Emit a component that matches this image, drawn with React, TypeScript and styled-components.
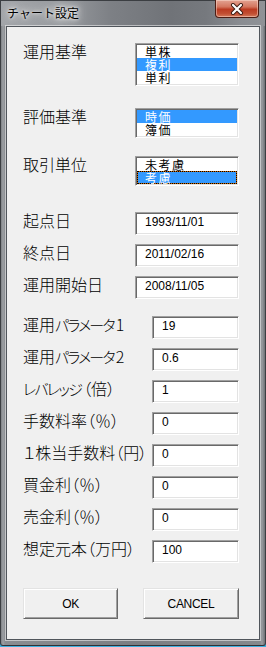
import React from 'react';
import styled, { createGlobalStyle, css } from 'styled-components';

const Global = createGlobalStyle`
  html, body { margin: 0; padding: 0; background: #3cb0e0; }
  body { width: 266px; height: 647px; overflow: hidden; }
  #root { width: 266px; height: 647px; }
`;

const Window = styled.div`
  width: 266px;
  height: 646px;
  box-sizing: border-box;
  display: flex;
  flex-direction: column;
  border: 1px solid #3b3e42;
  border-bottom-color: #2e3135;
  border-radius: 0 0 3px 3px;
  padding: 0 5px 5px 5px;
  background: linear-gradient(
    90deg,
    #7e8185 0px,
    #9da0a4 2px,
    #8a8d91 4px,
    #7b7e82 50%,
    #85888c calc(100% - 5px),
    #989b9f calc(100% - 3px),
    #6e7175 100%
  );
`;

const TitleBar = styled.div`
  flex: none;
  height: 25px;
  margin: 0 -5px;
  display: flex;
  align-items: flex-start;
  justify-content: space-between;
  background: linear-gradient(
    90deg,
    #a2a5a9 0px,
    #989b9f 60px,
    #7d8085 110px,
    #707378 170px,
    #76797e 205px,
    #8a8d92 240px,
    #8f9296 264px
  );
`;

const Title = styled.span`
  margin: 5px 0 0 6px;
  font: 12px/14px "Noto Sans CJK JP", sans-serif;
  color: #000;
  white-space: nowrap;
  text-shadow: 0 0 3px #fff, 0 0 7px rgba(255, 255, 255, 0.95), 0 0 12px rgba(255, 255, 255, 0.85);
`;

const CloseButton = styled.div`
  width: 44px;
  height: 18px;
  box-sizing: border-box;
  margin: -1px 6px 0 0;
  display: flex;
  align-items: center;
  justify-content: center;
  border: 1px solid #4c1d14;
  border-top: none;
  border-radius: 0 0 4px 4px;
  background: linear-gradient(180deg, #e3a392 0%, #d4765f 40%, #bb3b22 55%, #c24f33 80%, #d37a5c 100%);
  box-shadow: inset 0 0 0 1px rgba(255, 230, 220, 0.45);
`;

const Client = styled.div`
  flex: 1;
  box-sizing: border-box;
  background: #f0f0f0;
  border: 1px solid #50555b;
  box-shadow: 0 0 0 1px rgba(255, 255, 255, 0.5);
  padding: 16px 0 0 16px;
  display: flex;
  flex-direction: column;
`;

const Row = styled.div<{ $top: number; $label: number }>`
  display: grid;
  grid-template-columns: ${(p) => p.$label}px auto;
  align-items: start;
  margin-top: ${(p) => p.$top}px;
`;

const Label = styled.div`
  font: 300 16px/16px "Noto Sans CJK JP", sans-serif;
  font-feature-settings: "palt" 1;
  color: #000;
  white-space: nowrap;
`;

const Kana = styled.span`
  font-size: 15px;
  letter-spacing: -1.8px;
  margin-right: 2px;
`;

const sunken = css`
  border-style: solid;
  border-width: 1px;
  border-color: #a0a0a0 #ffffff #ffffff #a0a0a0;
  box-shadow: inset 1px 1px 0 #696969, inset -1px -1px 0 #e3e3e3;
`;

const ListBox = styled.div`
  ${sunken};
  width: 104px;
  box-sizing: border-box;
  padding: 1px;
  background: #fff;
  display: flex;
  flex-direction: column;
`;

const Item = styled.div<{ $sel?: boolean; $focus?: boolean }>`
  height: 13px;
  box-sizing: border-box;
  padding-left: 8px;
  font: 12px/13px "Noto Sans CJK JP", sans-serif;
  letter-spacing: 1.5px;
  white-space: nowrap;
  color: ${(p) => (p.$sel ? '#fff' : '#000')};
  background: ${(p) => (p.$sel ? '#3399ff' : 'transparent')};
  ${(p) =>
    p.$focus &&
    css`
      border: 1px dotted #000;
      padding-left: 7px;
      line-height: 11px;
      background: linear-gradient(#3399ff, #3399ff) padding-box, linear-gradient(#cc6600, #cc6600) border-box;
    `}
`;

const Field = styled.div<{ $w: number }>`
  ${sunken};
  width: ${(p) => p.$w}px;
  height: 23px;
  box-sizing: border-box;
  background: #fff;
  padding: 2px 0 0 9px;
  font: 12px/14px "Liberation Sans", Arial, sans-serif;
  color: #000;
  white-space: nowrap;
`;

const ButtonRow = styled.div`
  display: flex;
  gap: 25px;
  margin-top: 25px;
`;

const Button = styled.button<{ $w: number }>`
  width: ${(p) => p.$w}px;
  height: 31px;
  box-sizing: border-box;
  padding: 0;
  background: #f0f0f0;
  border: 1px solid;
  border-color: #e3e3e3 #696969 #696969 #e3e3e3;
  box-shadow: inset 1px 1px 0 #fff, inset -1px -1px 0 #a0a0a0;
  font: 12px/14px "Liberation Sans", Arial, sans-serif;
  letter-spacing: -0.3px;
  color: #000;
`;

const CloseIcon = () => (
  <svg width="14" height="12" viewBox="0 0 14 12">
    <path d="M3 2 L11 10 M11 2 L3 10" stroke="#3a1a12" strokeWidth="4" strokeLinecap="round" fill="none" />
    <path d="M3 2 L11 10 M11 2 L3 10" stroke="#ffffff" strokeWidth="2.2" strokeLinecap="round" fill="none" />
  </svg>
);

const dateRows = [
  { label: '起点日', value: '1993/11/01', top: 26 },
  { label: '終点日', value: '2011/02/16', top: 9 },
  { label: '運用開始日', value: '2008/11/05', top: 9 },
];

const paramRows: { label: React.ReactNode; key: string; value: string }[] = [
  { key: 'p1', label: <>運用<Kana>パラメータ</Kana>1</>, value: '19' },
  { key: 'p2', label: <>運用<Kana>パラメータ</Kana>2</>, value: '0.6' },
  { key: 'lev', label: <><Kana>レバレッジ</Kana>（倍）</>, value: '1' },
  { key: 'fee', label: '手数料率（％）', value: '0' },
  { key: 'fee1', label: '１株当手数料（円）', value: '0' },
  { key: 'buy', label: '買金利（％）', value: '0' },
  { key: 'sell', label: '売金利（％）', value: '0' },
  { key: 'cap', label: '想定元本（万円）', value: '100' },
];

export default function App() {
  return (
    <>
      <Global />
      <Window>
        <TitleBar>
          <Title>チャート設定</Title>
          <CloseButton>
            <CloseIcon />
          </CloseButton>
        </TitleBar>
        <Client>
          <Row $top={0} $label={112}>
            <Label>運用基準</Label>
            <ListBox>
              <Item>単株</Item>
              <Item $sel>複利</Item>
              <Item>単利</Item>
            </ListBox>
          </Row>
          <Row $top={22} $label={112}>
            <Label>評価基準</Label>
            <ListBox>
              <Item $sel>時価</Item>
              <Item>簿価</Item>
            </ListBox>
          </Row>
          <Row $top={18} $label={112}>
            <Label>取引単位</Label>
            <ListBox>
              <Item>未考慮</Item>
              <Item $sel $focus>考慮</Item>
            </ListBox>
          </Row>
          {dateRows.map((r) => (
            <Row key={r.label} $top={r.top} $label={112}>
              <Label>{r.label}</Label>
              <Field $w={104}>{r.value}</Field>
            </Row>
          ))}
          {paramRows.map((r, i) => (
            <Row key={r.key} $top={i === 0 ? 17 : 9} $label={129}>
              <Label>{r.label}</Label>
              <Field $w={87}>{r.value}</Field>
            </Row>
          ))}
          <ButtonRow>
            <Button $w={95}>OK</Button>
            <Button $w={96}>CANCEL</Button>
          </ButtonRow>
        </Client>
      </Window>
    </>
  );
}
